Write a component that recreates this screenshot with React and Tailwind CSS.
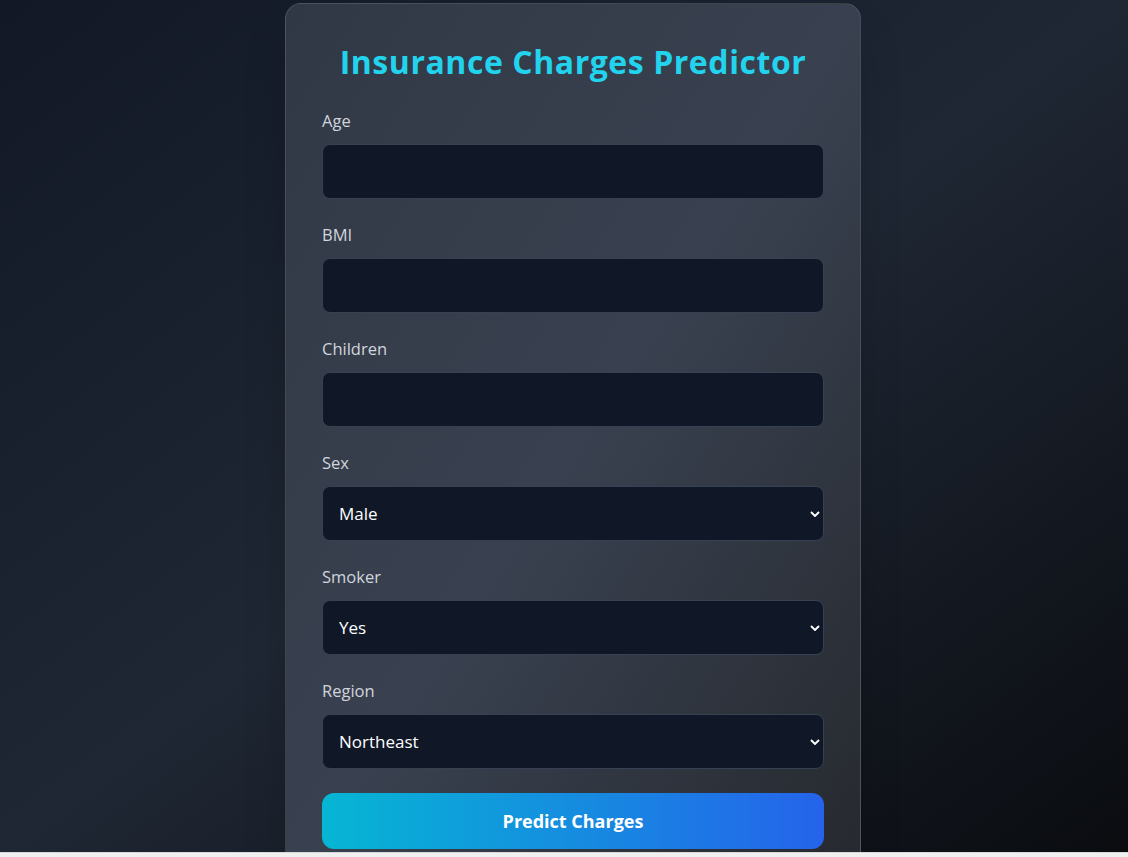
import React from "react";

const font = { fontFamily: '"Open Sans", "Noto Sans", sans-serif' };

function Field({ label, children }) {
  return (
    <div>
      <label className="mb-[11px] block text-[16.5px] leading-6 text-gray-300">{label}</label>
      {children}
    </div>
  );
}

function TextInput() {
  return (
    <input
      type="number"
      className="block h-[55px] w-full rounded-lg border border-gray-700 bg-gray-900 px-4 text-[17px] text-white outline-none"
    />
  );
}

function Select({ options }) {
  return (
    <div className="relative">
      <select className="block h-[55px] w-full appearance-none rounded-lg border border-gray-700 bg-gray-900 px-4 text-[17px] text-white outline-none">
        {options.map((o) => (
          <option key={o}>{o}</option>
        ))}
      </select>
      <svg
        className="pointer-events-none absolute right-[4px] top-1/2 -translate-y-1/2"
        width="10"
        height="6"
        viewBox="0 0 10 6"
        fill="none"
      >
        <path d="M1 1l4 4 4-4" stroke="white" strokeWidth="1.9" />
      </svg>
    </div>
  );
}

export default function App() {
  return (
    <div className="flex h-[857px] flex-col overflow-hidden" style={font}>
      <div className="flex h-[852px] justify-center overflow-hidden bg-[linear-gradient(to_bottom_right,#121826,#1f2734,#0a0c10)] pl-[18px] pt-[3px]">
        <div className="h-fit w-[576px] shrink-0 rounded-2xl border border-white/10 bg-[linear-gradient(to_bottom_right,#313845,#394150,#26292e)] px-9 pb-9 pt-[40px] shadow-2xl">
          <h1 className="mb-[29px] text-center text-[32px] font-bold leading-9 tracking-[0.55px] text-[#22d3ee]">
            Insurance Charges Predictor
          </h1>
          <div className="flex flex-col gap-6">
            <Field label="Age">
              <TextInput />
            </Field>
            <Field label="BMI">
              <TextInput />
            </Field>
            <Field label="Children">
              <TextInput />
            </Field>
            <Field label="Sex">
              <Select options={["Male", "Female"]} />
            </Field>
            <Field label="Smoker">
              <Select options={["Yes", "No"]} />
            </Field>
            <Field label="Region">
              <Select options={["Northeast", "Northwest", "Southeast", "Southwest"]} />
            </Field>
            <button className="h-14 w-full rounded-xl bg-[linear-gradient(to_right,#06b6d4,#2563eb)] text-lg font-bold text-white">
              Predict Charges
            </button>
          </div>
        </div>
      </div>
      <div className="h-[5px] border-t border-[#d9d9d9] bg-[#f0f0f0]" />
    </div>
  );
}
